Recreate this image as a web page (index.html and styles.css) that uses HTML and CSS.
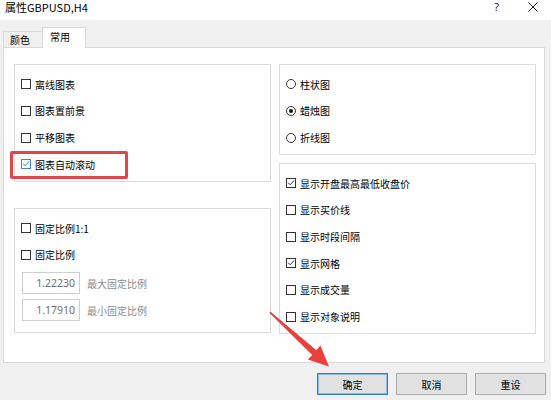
FILE: index.html
```html
<!DOCTYPE html>
<html lang="zh">
<head>
<meta charset="utf-8">
<title>属性GBPUSD,H4</title>
<link rel="stylesheet" href="styles.css">
</head>
<body>
<div class="titlebar">
  <span class="title">属性GBPUSD,H4</span>
  <span class="help">?</span>
  <svg class="close" width="10" height="10" viewBox="0 0 10 10"><path d="M0.5 0.5L9.5 9.5M9.5 0.5L0.5 9.5" stroke="#222" stroke-width="1"/></svg>
</div>
<div class="tabs">
  <div class="tab">颜色</div>
  <div class="tab active">常用</div>
</div>
<div class="panel">
  <div class="col">
    <div class="group g-lt">
      <div class="row"><span class="cb"></span>离线图表</div>
      <div class="row"><span class="cb"></span>图表置前景</div>
      <div class="row"><span class="cb"></span>平移图表</div>
      <div class="row"><span class="cb focus"><svg viewBox="0 0 10 10"><path d="M1.3 4.6L3.9 7.3L8.8 1.8" fill="none" stroke="#2f7fd0" stroke-width="1.2"/></svg></span>图表自动滚动</div>
    </div>
    <div class="group g-lb">
      <div class="row"><span class="cb"></span>固定比例1:1</div>
      <div class="row"><span class="cb"></span>固定比例</div>
      <div class="field"><span class="input">1.22230</span><span class="flabel">最大固定比例</span></div>
      <div class="field"><span class="input">1.17910</span><span class="flabel">最小固定比例</span></div>
    </div>
  </div>
  <div class="col">
    <div class="group g-rt">
      <div class="row"><span class="rb"></span>柱状图</div>
      <div class="row"><span class="rb on"></span>蜡烛图</div>
      <div class="row"><span class="rb"></span>折线图</div>
    </div>
    <div class="group g-rb">
      <div class="row"><span class="cb"><svg viewBox="0 0 10 10"><path d="M1.3 4.6L3.9 7.3L8.8 1.8" fill="none" stroke="#333" stroke-width="1.2"/></svg></span>显示开盘最高最低收盘价</div>
      <div class="row"><span class="cb"></span>显示买价线</div>
      <div class="row"><span class="cb"></span>显示时段间隔</div>
      <div class="row"><span class="cb"><svg viewBox="0 0 10 10"><path d="M1.3 4.6L3.9 7.3L8.8 1.8" fill="none" stroke="#333" stroke-width="1.2"/></svg></span>显示网格</div>
      <div class="row"><span class="cb"></span>显示成交量</div>
      <div class="row"><span class="cb"></span>显示对象说明</div>
    </div>
  </div>
</div>
<div class="footer">
  <button class="btn default">确定</button>
  <button class="btn">取消</button>
  <button class="btn">重设</button>
</div>
<div class="highlight"></div>
<svg class="arrow" width="551" height="400" viewBox="0 0 551 400">
  <polygon points="269.3,312.8 270.6,311.8 316.4,350.2 320.4,345.6 329,366.5 307.8,359.6 312.2,354.9" fill="#e8403d"/>
</svg>
</body>
</html>
```

FILE: styles.css
```css
html, body {
  margin: 0;
  padding: 0;
}
body {
  width: 551px;
  height: 400px;
  background: #f0f0f0;
  font-family: "Noto Sans CJK SC", "Noto Sans", sans-serif;
  font-size: 10px;
  color: #000;
  position: relative;
  overflow: hidden;
}
.titlebar {
  height: 20px;
  background: #fff;
  display: flex;
  align-items: flex-start;
  padding-left: 5px;
  box-sizing: border-box;
}
.title {
  font-size: 11px;
  line-height: 15px;
}
.help {
  margin-left: auto;
  margin-right: 29px;
  font-family: "Noto Sans", sans-serif;
  font-size: 11px;
  line-height: 14px;
  color: #222;
}
.close {
  margin-top: 2px;
  margin-right: 13px;
}
.tabs {
  height: 27px;
  display: flex;
  align-items: flex-end;
  padding-left: 3px;
  position: relative;
  z-index: 1;
}
.tab {
  height: 16px;
  width: 40px;
  box-sizing: border-box;
  border: 1px solid #d9d9d9;
  border-bottom: none;
  padding-left: 6px;
  line-height: 15px;
  background: #f0f0f0;
}
.tab.active {
  height: 21px;
  width: 44px;
  margin-left: -1px;
  margin-bottom: -1px;
  background: #fff;
  padding-left: 7px;
  line-height: 17px;
}
.panel {
  margin-left: 3px;
  width: 542px;
  height: 316px;
  box-sizing: border-box;
  border: 1px solid #d9d9d9;
  background: #fff;
  padding: 16px 8px 0 10px;
  display: flex;
  gap: 8px;
}
.col {
  width: 257px;
  display: flex;
  flex-direction: column;
}
.group {
  border: 1px solid #dcdcdc;
  box-sizing: border-box;
  padding: 6px 6px 0 6px;
}
.g-lt { height: 118px; }
.g-lb { height: 125px; margin-top: 26px; }
.g-rt { height: 91px; }
.g-rb { height: 171px; margin-top: 8px; }
.row {
  height: 26.67px;
  display: flex;
  align-items: center;
  white-space: nowrap;
}
.cb {
  width: 10px;
  height: 10px;
  box-sizing: border-box;
  border: 1px solid #333;
  background: #fff;
  margin-right: 4px;
  display: flex;
}
.cb svg {
  width: 8px;
  height: 8px;
}
.cb.focus {
  border-color: #3a86d4;
}
.rb {
  width: 10px;
  height: 10px;
  box-sizing: border-box;
  border: 1px solid #333;
  border-radius: 50%;
  background: #fff;
  margin-right: 4px;
  display: flex;
  align-items: center;
  justify-content: center;
}
.rb.on::after {
  content: "";
  width: 4px;
  height: 4px;
  border-radius: 50%;
  background: #111;
}
.field {
  display: flex;
  align-items: center;
  margin-left: 1px;
  margin-top: 4px;
}
.field + .field {
  margin-top: 5px;
}
.input {
  width: 58px;
  height: 22px;
  box-sizing: border-box;
  border: 1px solid #cfcfcf;
  text-align: right;
  padding-right: 4px;
  line-height: 20px;
  color: #707070;
  font-family: "Noto Sans", sans-serif;
  font-size: 10.5px;
  margin-right: 7px;
}
.flabel {
  color: #8c8c8c;
}
.footer {
  display: flex;
  justify-content: flex-end;
  gap: 8px;
  padding-top: 10px;
  padding-right: 5px;
}
.btn {
  width: 71px;
  height: 22px;
  box-sizing: border-box;
  background: #e1e1e1;
  border: 1px solid #adadad;
  font-family: inherit;
  font-size: 10px;
  color: #000;
  padding: 0;
  margin: 0;
}
.btn.default {
  border-color: #2f7bc4;
  box-shadow: inset 0 0 0 1px #8ab8e2;
}
.highlight {
  position: absolute;
  left: 10px;
  top: 151px;
  width: 118px;
  height: 28px;
  box-sizing: border-box;
  border: 3px solid #e0474c;
  border-radius: 2px;
}
.arrow {
  position: absolute;
  left: 0;
  top: 0;
  pointer-events: none;
}
```
